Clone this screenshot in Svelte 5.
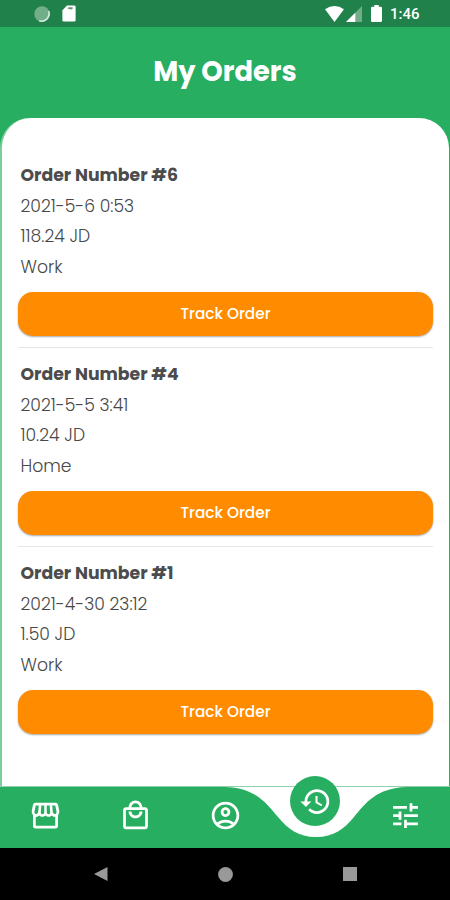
<script>
    const orders = [
        { number: 6, date: "2021-5-6 0:53", total: "118.24", place: "Work" },
        { number: 4, date: "2021-5-5 3:41", total: "10.24", place: "Home" },
        { number: 1, date: "2021-4-30 23:12", total: "1.50", place: "Work" },
    ];

    const tabs = [
        {
            name: "store",
            path: "M4.6 2.8h14.8a1.8 1.8 0 0 1 1.7 1.3l.9 4.500a4 4 0 0 1-.9 3.300V19.500a2 2 0 0 1-2 2H4.900a2 2 0 0 1-2-2V11.900a4 4 0 0 1-.9-3.300L2.900 4.100a1.800 1.800 0 0 1 1.700-1.300zM4.900 4.700L4 9c-.2 1 .3 1.900 1.200 1.900.8 0 1.400-.6 1.500-1.400L7.100 4.700zM9 4.700l-.4 4.900c-.1.800.4 1.500 1.100 1.500.8 0 1.400-.6 1.400-1.400V4.700zM12.900 4.700v5c0 .8.600 1.400 1.400 1.400.7 0 1.200-.7 1.100-1.500L15 4.700zM16.900 4.700l.4 4.800c.1.800.7 1.400 1.500 1.400.9 0 1.400-.9 1.200-1.900l-.9-4.300zM4.900 13v6.500h14.200V13c-1 .1-1.900-.3-2.500-1-1.300 1.300-3.300 1.300-4.600 0-1.300 1.300-3.300 1.300-4.600 0-.6.7-1.500 1.100-2.500 1z",
        },
        {
            name: "bag",
            path: "M19 6h-2c0-2.76-2.24-5-5-5S7 3.24 7 6H5c-1.1 0-2 .9-2 2v12c0 1.1.9 2 2 2h14c1.1 0 2-.9 2-2V8c0-1.1-.9-2-2-2zm-7-3c1.66 0 3 1.34 3 3H9c0-1.66 1.34-3 3-3zm7 17H5V8h14v12zm-7-8c-1.66 0-3-1.34-3-3H7c0 2.76 2.24 5 5 5s5-2.24 5-5h-2c0 1.66-1.34 3-3 3z",
        },
        {
            name: "account",
            path: "M12 2C6.48 2 2 6.48 2 12s4.48 10 10 10 10-4.48 10-10S17.52 2 12 2zM7.35 18.5C8.66 17.56 10.26 17 12 17s3.34.56 4.65 1.5C15.34 19.44 13.74 20 12 20s-3.34-.56-4.65-1.5zm10.79-1.38C16.45 15.8 14.32 15 12 15s-4.45.8-6.14 2.12C4.7 15.73 4 13.95 4 12c0-4.42 3.58-8 8-8s8 3.58 8 8c0 1.95-.7 3.73-1.86 5.12zM12 6c-1.93 0-3.5 1.57-3.5 3.5S10.07 13 12 13s3.5-1.57 3.5-3.5S13.93 6 12 6zm0 5c-.83 0-1.5-.67-1.5-1.5S11.17 8 12 8s1.5.67 1.5 1.5S12.83 11 12 11z",
        },
        {
            name: "history",
            active: true,
            path: "M13 3a9 9 0 0 0-9 9H1l3.89 3.89.07.14L9 12H6c0-3.87 3.13-7 7-7s7 3.13 7 7-3.13 7-7 7c-1.93 0-3.68-.79-4.94-2.06l-1.42 1.42A8.954 8.954 0 0 0 13 21a9 9 0 0 0 0-18zm-1 5v5l4.28 2.54.72-1.21-3.5-2.08V8H12z",
        },
        {
            name: "settings",
            path: "M3 17v2h6v-2H3zM3 5v2h10V5H3zm10 16v-2h8v-2h-8v-2h-2v6h2zM7 9v2H3v2h4v2h2V9H7zm14 4v-2H11v2h10zm-6-4h2V7h4V5h-4V3h-2v6z",
        },
    ];
</script>

<div class="screen">
    <div class="status">
        <div class="group">
            <svg width="16" height="16" viewBox="0 0 16 16">
                <circle cx="8" cy="8" r="7.7" fill="#71ae89" />
                <path d="M14.8 5A7.5 7.5 0 0 1 5.2 15 8.4 8.4 0 0 0 14.8 5z" fill="#d5eadc" stroke="#d5eadc" />
            </svg>
            <svg width="14" height="17" viewBox="0 0 14 17">
                <path d="M5 .5h7.3a1.3 1.3 0 0 1 1.3 1.3v13.4a1.3 1.3 0 0 1-1.3 1.3H1.7a1.3 1.3 0 0 1-1.3-1.3V5.2z" fill="#fff" />
                <path d="M5.3 3.5l1.5-1.2h3.8v1.4L9.3 4.6z" fill="#63936f" />
            </svg>
        </div>
        <div class="group right">
            <svg width="19" height="16" viewBox="0 0 19 16">
                <path d="M0 3.2Q9.5-3 19 3.2L9.5 16z" fill="#fff" />
            </svg>
            <svg class="signal" width="16" height="16" viewBox="0 0 16 16">
                <path d="M0 16L16 0v16z" fill="#72ad88" />
                <path d="M0 16L9.3 6.7V16z" fill="#fff" />
            </svg>
            <svg class="battery" width="11" height="17" viewBox="0 0 11 17">
                <path d="M3.3 0h4.4v1.7h2q1.3 0 1.3 1.3v12.7q0 1.3-1.3 1.3H1.3Q0 17 0 15.7V3q0-1.3 1.3-1.3h2z" fill="#fff" />
            </svg>
            <span class="clock">1:46</span>
        </div>
    </div>

    <header><h1>My Orders</h1></header>

    <main>
        {#each orders as order}
            <section class="order">
                <h2>Order Number #{order.number}</h2>
                <p>{order.date}</p>
                <p>{order.total} JD</p>
                <p>{order.place}</p>
                <button>Track Order</button>
            </section>
        {/each}
    </main>

    <nav>
        <svg class="notch" width="182" height="51" viewBox="0 0 182 51">
            <path d="M0 0C31 1 41 16 53 30 63 42 73 50 91 50s28-8 38-20C141 16 151 1 182 0z" fill="#fff" />
        </svg>
        {#each tabs as tab}
            <div class="tab" class:active={tab.active}>
                <svg width="33" height="33" viewBox="0 0 24 24" aria-label={tab.name}>
                    <path d={tab.path} fill="#fff" fill-rule="evenodd" />
                </svg>
            </div>
        {/each}
    </nav>

    <div class="system">
        <svg width="14" height="14" viewBox="0 0 14 14"><path d="M0 7L13.5 0v14z" /></svg>
        <svg width="15" height="15" viewBox="0 0 15 15"><circle cx="7.5" cy="7.5" r="7.4" /></svg>
        <svg width="14" height="14" viewBox="0 0 14 14"><path d="M0 0h14v14H0z" /></svg>
    </div>
</div>

<style>
    :global(body) {
        margin: 0;
    }

    .screen {
        display: flex;
        flex-direction: column;
        width: 450px;
        height: 900px;
        overflow: hidden;
        background: #27ae60;
        font-family: Poppins, Inter, "Open Sans", sans-serif;
    }

    .status {
        display: flex;
        justify-content: space-between;
        box-sizing: border-box;
        height: 27px;
        padding: 0 30px 0 34px;
        background: #20824a;
    }

    .group {
        display: flex;
        align-items: center;
        gap: 12px;
    }

    .right {
        gap: 0;
    }

    .signal {
        margin-left: 2px;
    }

    .battery {
        margin-left: 9px;
    }

    .clock {
        width: 30px;
        margin-left: 8px;
        color: white;
        font: 500 15px/30px Roboto, sans-serif;
        white-space: nowrap;
    }

    header {
        height: 91px;
        text-align: center;
    }

    h1 {
        margin: 0;
        color: white;
        font-size: 27.3px;
        font-weight: 700;
        line-height: 89px;
    }

    main {
        flex: 1;
        box-sizing: border-box;
        padding: 41px 16px 0;
        margin-right: 1px;
        border-left: 2px solid #7dcc9d;
        border-radius: 30px 30px 0 0;
        background: white;
    }

    .order {
        box-sizing: border-box;
        height: 189px;
        margin-bottom: 10px;
        border-bottom: 1px solid #e6e6e9;
    }

    .order:last-child {
        border-bottom: none;
    }

    h2,
    p {
        height: 30.7px;
        margin: 0 0 0 2.5px;
        color: #484848;
        font-size: 17.2px;
        font-weight: 300;
        line-height: 33px;
    }

    h2 {
        color: #4c4c4c;
        font-size: 17.3px;
        font-weight: 700;
    }

    button {
        display: block;
        width: 415px;
        height: 44px;
        margin-top: 10px;
        padding: 0;
        border: none;
        border-radius: 15px;
        background: #ff8c00;
        box-shadow: 0 1px 2px rgba(0, 0, 0, 0.35);
        color: white;
        font-family: inherit;
        font-size: 15.3px;
        font-weight: 500;
    }

    nav {
        position: relative;
        display: flex;
        height: 61px;
        background: #27ae60;
        box-shadow: 0 -1px #8fd1aa;
    }

    .notch {
        position: absolute;
        left: 225px;
        top: 0;
    }

    .tab {
        display: flex;
        flex: 1;
        justify-content: center;
        padding-top: 12px;
    }

    .tab.active {
        position: relative;
        top: -11px;
        align-items: center;
        flex: none;
        width: 50px;
        height: 50px;
        margin: 0 20px;
        padding: 0;
        border-radius: 50%;
        background: #27ae60;
    }

    .system {
        display: flex;
        align-items: center;
        justify-content: space-between;
        box-sizing: border-box;
        height: 52px;
        padding: 0 93px 0 94px;
        background: black;
        fill: #999;
    }
</style>
